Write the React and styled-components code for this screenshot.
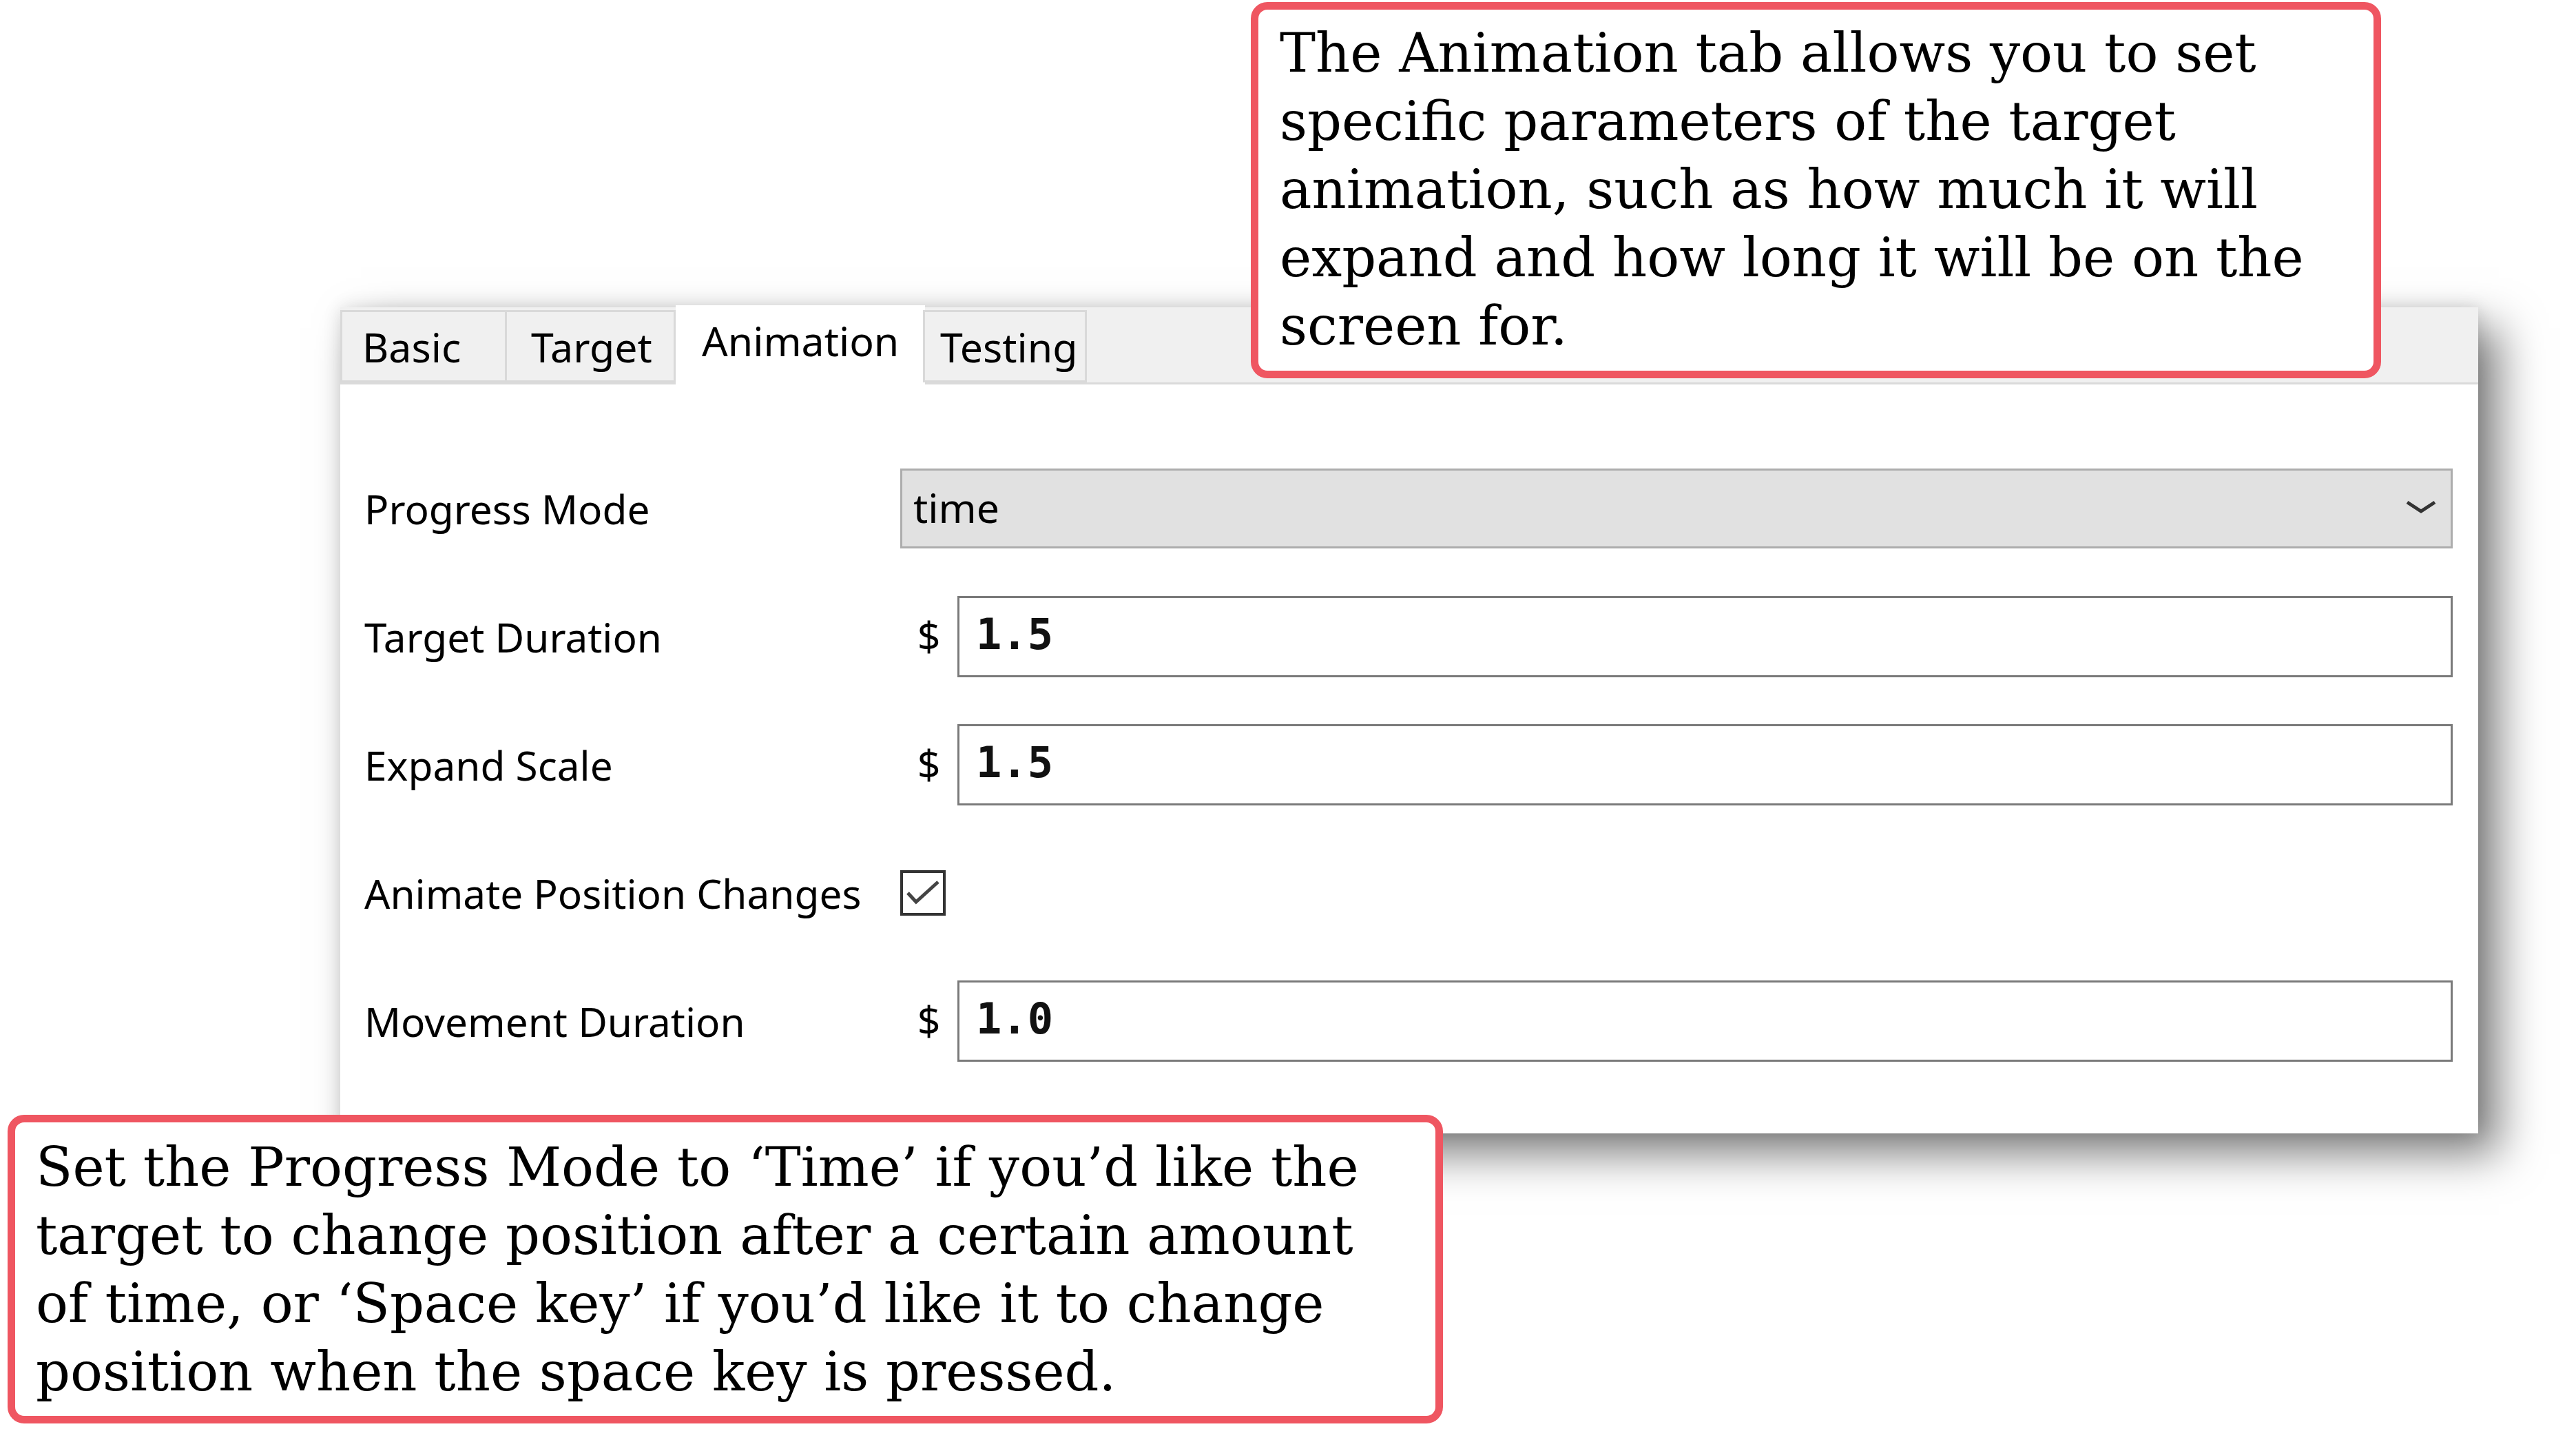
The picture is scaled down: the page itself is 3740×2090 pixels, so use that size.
import React from "react";
import styled, { createGlobalStyle } from "styled-components";

const Global = createGlobalStyle`
  html, body {
    margin: 0;
    padding: 0;
    background: #ffffff;
  }
  body {
    font-family: "Noto Sans", "Open Sans", sans-serif;
    overflow: hidden;
  }
`;

const Page = styled.div`
  position: relative;
  width: 3740px;
  height: 2090px;
  box-sizing: border-box;
  padding: 446px 0 0 494px;
  background: #ffffff;
`;

const Window = styled.div`
  width: 3104px;
  background: #ffffff;
  box-shadow: 0 0 24px rgba(0, 0, 0, 0.12), 30px 30px 60px rgba(0, 0, 0, 0.5);
  font-family: "Noto Sans", "Open Sans", sans-serif;
  font-size: 59px;
  color: #000;
`;

const TabStrip = styled.div`
  display: flex;
  align-items: flex-end;
  height: 112px;
  box-sizing: border-box;
  background: #f0f0f0;
  border-bottom: 3px solid #dadada;
`;

const Tab = styled.div`
  box-sizing: border-box;
  width: ${(p) => p.$w}px;
  padding-left: ${(p) => p.$pl}px;
  display: flex;
  align-items: center;
  white-space: nowrap;
  line-height: 1;
  ${(p) =>
    p.$active
      ? `
    height: 115px;
    margin-bottom: -3px;
    background: #ffffff;
    padding-bottom: 12px;
  `
      : `
    height: 105px;
    background: #f0f0f0;
    border: 3px solid #d9d9d9;
    margin-left: -3px;
    &:first-child { margin-left: 0; }
    padding-top: 2px;
  `}
`;

const Body = styled.div`
  display: grid;
  grid-template-columns: 778px 1fr;
  grid-auto-rows: 118px;
  row-gap: 68px;
  padding: 121px 37px 104px 35px;
`;

const Label = styled.div`
  display: flex;
  align-items: center;
  white-space: nowrap;
  font-size: 58.5px;
  color: #000;
`;

const Field = styled.div`
  display: flex;
  align-items: center;
  min-width: 0;
`;

const Select = styled.div`
  flex: 1;
  height: 116px;
  box-sizing: border-box;
  background: #e1e1e1;
  border: 3px solid #adadad;
  display: flex;
  align-items: center;
  justify-content: space-between;
  padding: 0 21px 4px 16px;
  font-size: 59px;
`;

const Prefix = styled.span`
  width: 83px;
  flex: none;
  text-align: center;
  font-size: 59px;
  color: #000;
  padding-bottom: 4px;
`;

const Input = styled.div`
  flex: 1;
  height: 118px;
  box-sizing: border-box;
  border: 3px solid #7a7a7a;
  background: #ffffff;
  display: flex;
  align-items: center;
  padding: 0 0 8px 24px;
  font-family: "DejaVu Sans Mono", "Liberation Mono", monospace;
  font-weight: 700;
  font-size: 62px;
  color: #111;
`;

const CheckBox = styled.div`
  width: 66px;
  height: 66px;
  box-sizing: border-box;
  border: 4px solid #333333;
  background: #ffffff;
  display: flex;
`;

const Callout = styled.div`
  position: absolute;
  left: ${(p) => p.$x}px;
  top: ${(p) => p.$y}px;
  width: ${(p) => p.$w}px;
  box-sizing: border-box;
  background: #ffffff;
  border: 11px solid #ef5661;
  border-radius: 24px;
  padding: ${(p) => p.$pt}px 20px ${(p) => p.$pb}px ${(p) => p.$pl}px;
  font-family: "DejaVu Serif", "Liberation Serif", serif;
  font-size: 78px;
  line-height: 99px;
  color: #000;
`;

const Line = styled.div`
  white-space: nowrap;
`;

const Chevron = () => (
  <svg width="44" height="22" viewBox="0 0 44 22">
    <polyline
      points="2,4 22,17 42,4"
      fill="none"
      stroke="#333"
      strokeWidth="5"
      strokeLinejoin="miter"
    />
  </svg>
);

const Check = () => (
  <svg width="58" height="58" viewBox="0 0 58 58">
    <polyline
      points="7,29 19,42 51,13"
      fill="none"
      stroke="#444"
      strokeWidth="5"
    />
  </svg>
);

const tabs = [
  { name: "Basic", w: 242, pl: 29 },
  { name: "Target", w: 248, pl: 35 },
  { name: "Animation", w: 362, pl: 38 },
  { name: "Testing", w: 238, pl: 22 },
];

const numberRows = [
  { label: "Target Duration", value: "1.5" },
  { label: "Expand Scale", value: "1.5" },
];

export default function App() {
  return (
    <>
      <Global />
      <Page>
        <Window>
          <TabStrip>
            {tabs.map((t) => (
              <Tab key={t.name} $w={t.w} $pl={t.pl} $active={t.name === "Animation"}>
                {t.name}
              </Tab>
            ))}
          </TabStrip>
          <Body>
            <Label>Progress Mode</Label>
            <Field>
              <Select>
                <span>time</span>
                <Chevron />
              </Select>
            </Field>
            {numberRows.map((r) => (
              <React.Fragment key={r.label}>
                <Label>{r.label}</Label>
                <Field>
                  <Prefix>$</Prefix>
                  <Input>{r.value}</Input>
                </Field>
              </React.Fragment>
            ))}
            <Label>Animate Position Changes</Label>
            <Field>
              <CheckBox>
                <Check />
              </CheckBox>
            </Field>
            <Label>Movement Duration</Label>
            <Field>
              <Prefix>$</Prefix>
              <Input>1.0</Input>
            </Field>
          </Body>
        </Window>

        <Callout $x={1816} $y={3} $w={1641} $pt={14} $pb={15} $pl={31}>
          <Line>The Animation tab allows you to set</Line>
          <Line>specific parameters of the target</Line>
          <Line>animation, such as how much it will</Line>
          <Line>expand and how long it will be on the</Line>
          <Line>screen for.</Line>
        </Callout>

        <Callout $x={11} $y={1618} $w={2084} $pt={16} $pb={14} $pl={30}>
          <Line>Set the Progress Mode to ‘Time’ if you’d like the</Line>
          <Line>target to change position after a certain amount</Line>
          <Line>of time, or ‘Space key’ if you’d like it to change</Line>
          <Line>position when the space key is pressed.</Line>
        </Callout>
      </Page>
    </>
  );
}
